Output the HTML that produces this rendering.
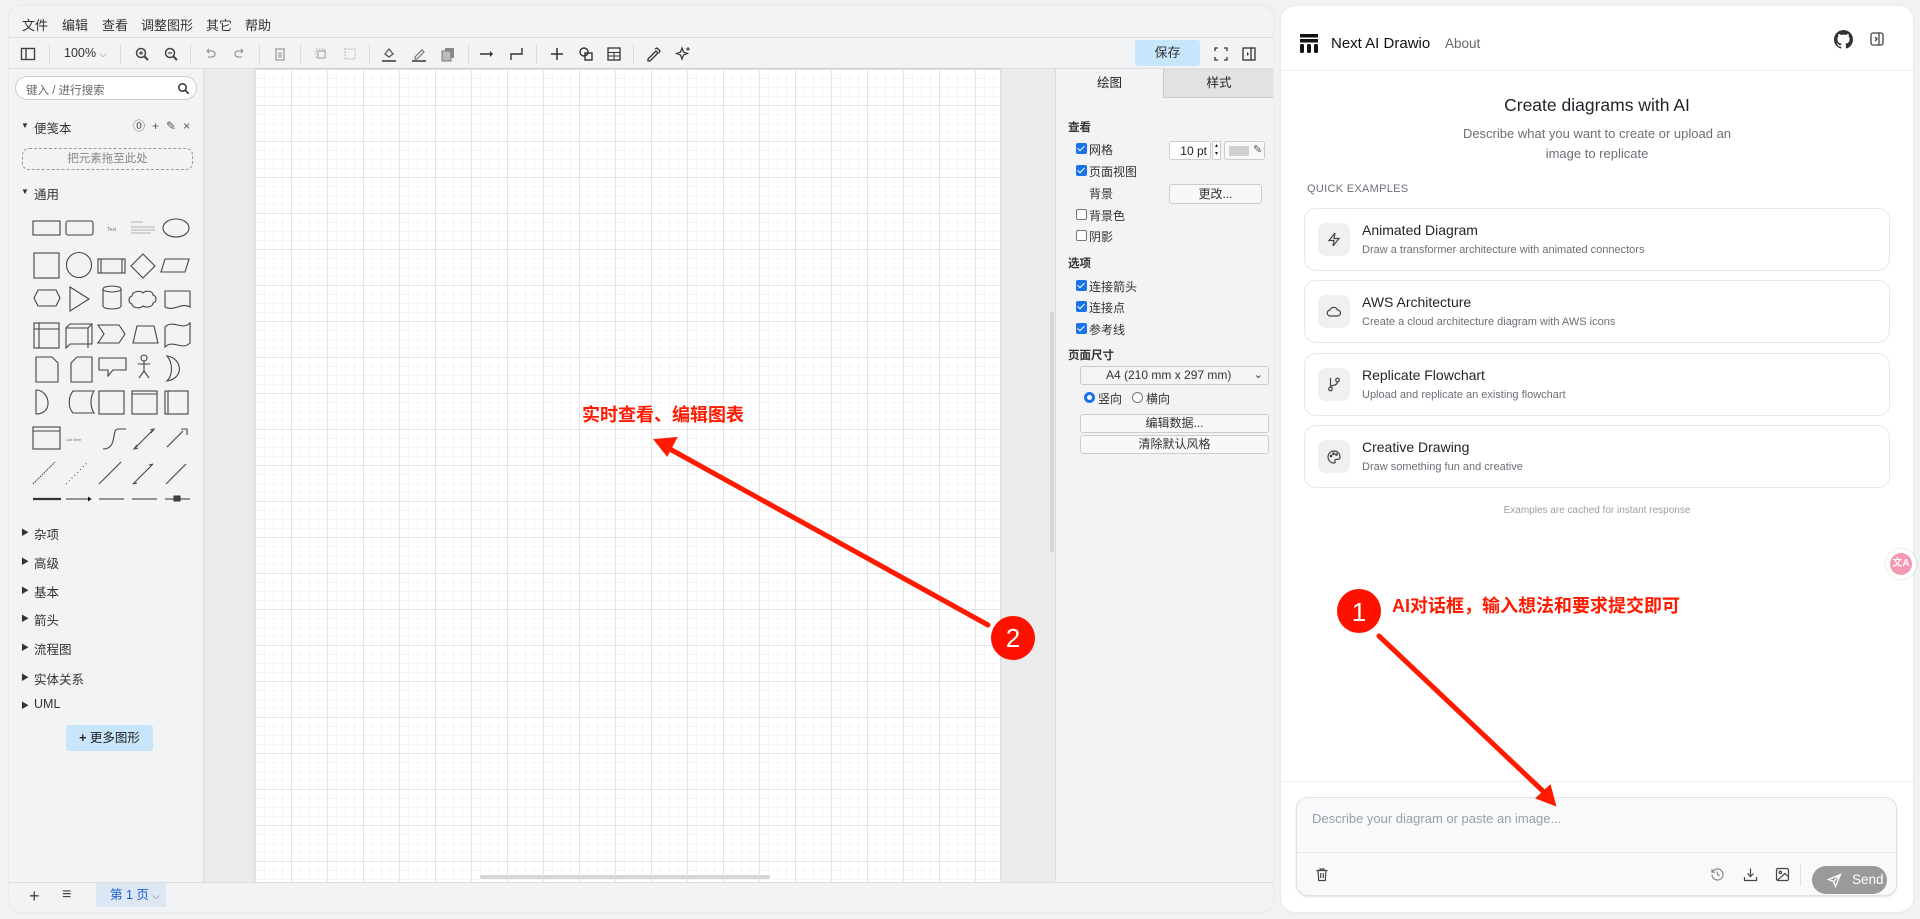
<!DOCTYPE html>
<html><head><meta charset="utf-8"><style>
*{box-sizing:border-box;margin:0;padding:0}
body{width:1920px;height:919px;overflow:hidden;background:#f1f2f4;font-family:"Liberation Sans","Noto Sans CJK SC",sans-serif;position:relative;color:#222}
.a{position:absolute}
.dp{left:9px;top:6px;width:1264px;height:906px;background:#f1f3f4;border-radius:12px;overflow:hidden;box-shadow:0 0 3px rgba(0,0,0,.08)}
.menu span{position:absolute;top:9px;font-size:13px;color:#333}
.tb{left:0;top:31px;width:1264px;height:32px;border-top:1px solid #dadce0;border-bottom:1px solid #dadce0}
.sep{position:absolute;top:6px;width:1px;height:20px;background:#dadce0}
.ic{position:absolute;top:7px;width:18px;height:18px}
.sb{left:0;top:63px;width:195px;height:813px;border-right:1px solid #dadce0}
.sbl{position:absolute;left:25px;font-size:12.5px;color:#333}
.tri{position:absolute;left:12px;font-size:8px;color:#333}
.canvas{left:195px;top:63px;width:852px;height:813px;background:#ebebeb}
.page{left:246px;top:63px;width:745px;height:813px;background-color:#fff;
background-image:linear-gradient(#e4e4e4 1px,transparent 1px),linear-gradient(90deg,#e4e4e4 1px,transparent 1px),linear-gradient(#f5f5f5 1px,transparent 1px),linear-gradient(90deg,#f5f5f5 1px,transparent 1px);
background-size:36px 36px,36px 36px,9px 9px,9px 9px;box-shadow:0 0 2px rgba(0,0,0,.2)}
.fp{left:1046px;top:63px;width:218px;height:813px;background:#f1f3f4;border-left:1px solid #dadce0}
.fl{position:absolute;font-size:12px;color:#333}
.cb{position:absolute;left:20px;width:11px;height:11px;border-radius:2px;background:#1a73e8}
.cb:after{content:"";position:absolute;left:3px;top:1px;width:3px;height:6px;border:solid #fff;border-width:0 1.5px 1.5px 0;transform:rotate(45deg)}
.cbo{position:absolute;left:20px;width:11px;height:11px;border-radius:2px;border:1px solid #777;background:#fff}
.btn{position:absolute;background:#f8f8f8;border:1px solid #ccc;border-radius:3px;font-size:12px;text-align:center;color:#333}
.rp{left:1281px;top:6px;width:632px;height:906px;background:#fff;border-radius:14px;box-shadow:0 0 3px rgba(0,0,0,.08)}
.card{position:absolute;left:23px;width:586px;height:63px;border:1px solid #e6e7ea;border-radius:12px}
.card .ib{position:absolute;left:13px;top:14px;width:32px;height:33px;background:#f0f0f1;border-radius:8px}
.card .t{position:absolute;left:57px;top:13px;font-size:14px;color:#1f2328}
.card .s{position:absolute;left:57px;top:35px;font-size:11px;color:#6b6f76}
.red{color:#ff1a00;font-weight:bold;font-family:"Liberation Sans","Noto Sans CJK SC",sans-serif}
</style></head><body>
<div class="a dp">
 <div class="menu"><span style="left:13px">文件</span><span style="left:53px">编辑</span><span style="left:93px">查看</span><span style="left:132px">调整图形</span><span style="left:197px">其它</span><span style="left:236px">帮助</span></div>
 <div class="a tb">
  <svg class="ic" style="left:10px" viewBox="0 0 18 18"><rect x="2.5" y="3.5" width="13" height="11" fill="none" stroke="#444" stroke-width="1.4"/><line x1="7" y1="3.5" x2="7" y2="14.5" stroke="#444" stroke-width="1.4"/></svg>
  <div class="sep" style="left:40px"></div>
  <span class="a" style="left:55px;top:8px;font-size:12.5px;color:#333">100% <span style="font-size:9px;color:#777">⌵</span></span>
  <div class="sep" style="left:111px"></div>
  <svg class="ic" style="left:124px" viewBox="0 0 18 18"><circle cx="8" cy="8" r="4.5" fill="none" stroke="#444" stroke-width="1.5"/><line x1="11" y1="11" x2="15" y2="15" stroke="#444" stroke-width="2"/><path d="M6 8h4M8 6v4" stroke="#444" stroke-width="1.2"/></svg>
  <svg class="ic" style="left:153px" viewBox="0 0 18 18"><circle cx="8" cy="8" r="4.5" fill="none" stroke="#444" stroke-width="1.5"/><line x1="11" y1="11" x2="15" y2="15" stroke="#444" stroke-width="2"/><path d="M6 8h4" stroke="#444" stroke-width="1.2"/></svg>
  <div class="sep" style="left:181px"></div>
  <svg class="ic" style="left:192px" viewBox="0 0 18 18"><path d="M6 6h5a3 3 0 010 6H7M6 6l2-2M6 6l2 2" fill="none" stroke="#999" stroke-width="1.3"/></svg>
  <svg class="ic" style="left:222px" viewBox="0 0 18 18"><path d="M12 6H7a3 3 0 000 6h4M12 6l-2-2M12 6l-2 2" fill="none" stroke="#999" stroke-width="1.3"/></svg>
  <div class="sep" style="left:250px"></div>
  <svg class="ic" style="left:262px" viewBox="0 0 18 18"><rect x="5" y="4" width="8" height="11" fill="none" stroke="#999" stroke-width="1.2"/><path d="M4 4h10M8 7v6M10 7v6" stroke="#999"/></svg>
  <div class="sep" style="left:291px"></div>
  <svg class="ic" style="left:303px" viewBox="0 0 18 18"><rect x="4" y="4" width="9" height="9" fill="none" stroke="#aaa" stroke-dasharray="1.5 1.5"/><rect x="6" y="6" width="7" height="7" fill="none" stroke="#999"/></svg>
  <svg class="ic" style="left:332px" viewBox="0 0 18 18"><rect x="4" y="4" width="10" height="10" fill="none" stroke="#aaa" stroke-dasharray="1.5 1.5"/></svg>
  <div class="sep" style="left:360px"></div>
  <svg class="ic" style="left:371px" viewBox="0 0 18 18"><path d="M5 9l4-5 4 5-4 3z" fill="none" stroke="#555" stroke-width="1.3"/><rect x="2" y="15" width="14" height="2" fill="#666"/></svg>
  <svg class="ic" style="left:401px" viewBox="0 0 18 18"><path d="M5 12l7-7 2 2-7 7H5z" fill="none" stroke="#777" stroke-width="1.2"/><rect x="2" y="15" width="14" height="2" fill="#666"/></svg>
  <svg class="ic" style="left:430px" viewBox="0 0 18 18"><rect x="6" y="3" width="9" height="10" fill="#888"/><rect x="3" y="6" width="9" height="10" fill="#bbb" stroke="#777"/></svg>
  <div class="sep" style="left:459px"></div>
  <svg class="ic" style="left:469px" viewBox="0 0 18 18"><path d="M2 9h12" stroke="#333" stroke-width="1.4"/><path d="M12 6l3 3-3 3z" fill="#333"/></svg>
  <svg class="ic" style="left:499px" viewBox="0 0 18 18"><path d="M3 15v-6h11V3" fill="none" stroke="#333" stroke-width="1.4"/></svg>
  <div class="sep" style="left:527px"></div>
  <svg class="ic" style="left:539px" viewBox="0 0 18 18"><path d="M9 3v12M3 9h12" stroke="#333" stroke-width="1.5"/></svg>
  <svg class="ic" style="left:568px" viewBox="0 0 18 18"><circle cx="7" cy="7" r="4" fill="none" stroke="#333" stroke-width="1.4"/><rect x="8" y="8" width="7" height="7" fill="none" stroke="#333" stroke-width="1.4"/></svg>
  <svg class="ic" style="left:596px" viewBox="0 0 18 18"><rect x="3" y="3" width="12" height="12" fill="none" stroke="#333" stroke-width="1.3"/><path d="M3 7.5h12M3 11h12M9 7.5v7.5" stroke="#333"/></svg>
  <div class="sep" style="left:624px"></div>
  <svg class="ic" style="left:636px" viewBox="0 0 18 18"><path d="M3 14l8-8 2 2-8 8H3zM10 4l2-1 3 3-1 2" fill="none" stroke="#333" stroke-width="1.3"/></svg>
  <svg class="ic" style="left:665px" viewBox="0 0 18 18"><path d="M8 3l1.5 4 4 1.5-4 1.5L8 14l-1.5-4-4-1.5 4-1.5z" fill="none" stroke="#333" stroke-width="1.2"/><path d="M14 2v4M12 4h4" stroke="#333"/></svg>
  <div class="a" style="left:1126px;top:2px;width:65px;height:26px;background:#c7e5fb;border-radius:3px;font-size:13px;text-align:center;line-height:26px;color:#333">保存</div>
  <svg class="ic" style="left:1203px" viewBox="0 0 18 18"><path d="M3 6V3h3M12 3h3v3M15 12v3h-3M6 15H3v-3" fill="none" stroke="#333" stroke-width="1.3"/></svg>
  <svg class="ic" style="left:1231px" viewBox="0 0 18 18"><rect x="3" y="3" width="12" height="12" fill="none" stroke="#333" stroke-width="1.3"/><path d="M11 3v12" stroke="#333" stroke-width="1.3"/><path d="M7 7l2 2-2 2z" fill="#333"/></svg>
 </div>
 <div class="a sb">
  <div class="a" style="left:6px;top:7px;width:182px;height:24px;background:#fff;border:1px solid #ccc;border-radius:12px;font-size:11.5px;color:#666;padding:5px 0 0 10px">键入 / 进行搜索</div>
  <svg class="a" style="left:168px;top:13px" width="13" height="13" viewBox="0 0 13 13"><circle cx="5.5" cy="5.5" r="3.7" fill="none" stroke="#333" stroke-width="1.5"/><path d="M8.2 8.2l3.5 3.5" stroke="#333" stroke-width="1.7"/></svg>
  <span class="tri" style="top:52px">▼</span><span class="sbl" style="top:49px">便笺本</span>
  <span class="a" style="left:124px;top:48px;font-size:12px;color:#555;letter-spacing:7px">⓪+✎×</span>
  <div class="a" style="left:13px;top:79px;width:171px;height:22px;border:1px dashed #999;border-radius:7px;font-size:11.5px;color:#888;text-align:center;line-height:20px">把元素拖至此处</div>
  <span class="tri" style="top:118px">▼</span><span class="sbl" style="top:115px">通用</span>
  <svg class="a" style="left:12px;top:140px" width="175" height="300" viewBox="0 0 175 300" fill="none" stroke="#444" stroke-width="1.1">
   <rect x="12" y="12" width="27" height="14"/><rect x="45" y="12" width="27" height="14" rx="2"/><text x="86" y="22" font-size="5" fill="#777" stroke="none">Text</text><path d="M110 13h12M110 18h24M110 21h24M110 24h20" stroke="#999" stroke-width=".8"/><ellipse cx="155" cy="19" rx="13" ry="9"/>
   <rect x="13" y="44" width="25" height="25"/><circle cx="58" cy="56" r="12.5"/><rect x="77" y="50" width="27" height="14"/><path d="M80 50v14M101 50v14"/><path d="M122 45l12 12-12 12-12-12z"/><path d="M144 50h24l-4 13h-24z"/>
   <path d="M13 89l4-8h18l4 8-4 8H17z"/><path d="M49 78l19 12-19 12z"/><path d="M82 80a9 3 0 0018 0v17a9 3 0 01-18 0zM82 80a9 3 0 0118 0"/><path d="M111 87c0-5 9-6 11-3 3-3 10-2 10 2 4 1 4 7 0 8 0 4-7 5-10 3-3 3-11 2-11-2-4-1-4-7 0-8z"/><path d="M144 82h25v16c-8-5-17 5-25 0z"/>
   <rect x="13" y="114" width="25" height="25"/><path d="M13 120h25M18 114v25"/><path d="M45 119l4-4h22v20H49l-4 4v-20h22l4-4M67 119v20"/><path d="M77 116h21l6 9-6 9H77l6-9z"/><path d="M112 134l4-17h17l4 17z"/><path d="M144 118c8-8 17 4 25-4v20c-8 8-17-4-25 4z"/>
   <path d="M15 148h16l6 6v19H15z"/><path d="M50 154l6-6h15v25H50z"/><path d="M78 149h27v12H92l-5 6v-6h-9z"/><circle cx="123" cy="149" r="3"/><path d="M123 152v10M117 155h12M123 162l-5 7M123 162l5 7"/><path d="M146 147c15 2 18 22 0 25 6-6 6-18 0-25z"/>
   <path d="M15 181c14 0 18 24 0 24z"/><path d="M52 182h21c-4 6-4 16 0 22H52c-5-5-5-16 0-22z"/><rect x="78" y="182" width="25" height="23"/><rect x="111" y="182" width="25" height="23"/><path d="M111 185h25"/><rect x="144" y="182" width="23" height="23"/><path d="M147 182v23"/>
   <rect x="12" y="218" width="27" height="22"/><path d="M12 222h27"/><text x="45" y="232" font-size="4" fill="#777" stroke="none">List Item</text><path d="M82 240c15 0 8-20 15-20h8"/><path d="M113 240l20-20M116 236l-3 4 4-1M130 224l3-4-4 1"/><path d="M146 238l16-16M160 220h6v6"/>
   <path d="M12 275l22-22" stroke-dasharray="1.5 1"/><path d="M45 275l22-22" stroke-dasharray="1 3"/><path d="M78 275l22-22"/><path d="M112 275l20-20M112 275l4-1M132 255l-4 1"/><path d="M145 275l20-20"/>
  </svg>
  <svg class="a" style="left:12px;top:424px" width="175" height="12" viewBox="0 0 175 12" stroke="#333"><path d="M12 6h28" stroke-width="2.2"/><path d="M45 6h22M67 4l3 2-3 2" stroke-width="1"/><path d="M78 6h25" stroke-width="1"/><path d="M111 6h25" stroke-width="1"/><path d="M144 6h25" stroke-width="1"/><rect x="153" y="3" width="6" height="5" fill="#444"/></svg>
  <span class="tri" style="top:458px">▶</span><span class="sbl" style="top:455px">杂项</span>
  <span class="tri" style="top:487px">▶</span><span class="sbl" style="top:484px">高级</span>
  <span class="tri" style="top:516px">▶</span><span class="sbl" style="top:513px">基本</span>
  <span class="tri" style="top:544px">▶</span><span class="sbl" style="top:541px">箭头</span>
  <span class="tri" style="top:573px">▶</span><span class="sbl" style="top:570px">流程图</span>
  <span class="tri" style="top:603px">▶</span><span class="sbl" style="top:600px">实体关系</span>
  <span class="tri" style="top:631px">▶</span><span class="sbl" style="top:628px">UML</span>
  <div class="a" style="left:57px;top:656px;width:87px;height:26px;background:#c7e5fb;border-radius:3px;font-size:12.5px;text-align:center;line-height:26px;color:#222"><b>+</b> 更多图形</div>
 </div>
 <div class="a canvas"></div>
 <div class="a page"></div>
 <div class="a" style="left:1041px;top:306px;width:4px;height:240px;background:#d6d6d6;border-radius:2px"></div>
 <div class="a" style="left:471px;top:869px;width:290px;height:4px;background:#d6d6d6;border-radius:2px"></div>
 <div class="a fp">
  <div class="a" style="left:0;top:0;width:107px;height:29px;text-align:center;line-height:29px;font-size:12.5px">绘图</div>
  <div class="a" style="left:107px;top:0;width:111px;height:29px;background:#e2e2e2;border-left:1px solid #ccc;border-bottom:1px solid #ccc;text-align:center;line-height:29px;font-size:12.5px">样式</div>
  <span class="fl" style="left:12px;top:50px;font-weight:bold;font-size:11.5px">查看</span>
  <div class="cb" style="top:74px"></div><span class="fl" style="left:33px;top:72px">网格</span>
  <div class="a" style="left:113px;top:72px;width:42px;height:19px;background:#fff;border:1px solid #ccc;border-radius:3px;font-size:12px;text-align:right;padding:2px 3px 0 0">10 pt</div>
  <div class="a" style="left:156px;top:72px;width:9px;height:19px;border:1px solid #ccc;background:#fff;font-size:6px;line-height:8px;text-align:center">▴<br>▾</div>
  <div class="a" style="left:168px;top:72px;width:41px;height:19px;border:1px solid #ccc;border-radius:3px;background:#f8f8f8"><div class="a" style="left:4px;top:4px;width:20px;height:10px;background:#d0d0d0"></div><span class="a" style="left:28px;top:1px;font-size:11px;color:#555">✎</span></div>
  <div class="cb" style="top:96px"></div><span class="fl" style="left:33px;top:94px">页面视图</span>
  <span class="fl" style="left:33px;top:116px">背景</span>
  <div class="btn" style="left:113px;top:115px;width:93px;height:20px;line-height:18px">更改...</div>
  <div class="cbo" style="top:140px"></div><span class="fl" style="left:33px;top:138px">背景色</span>
  <div class="cbo" style="top:161px"></div><span class="fl" style="left:33px;top:159px">阴影</span>
  <span class="fl" style="left:12px;top:186px;font-weight:bold;font-size:11.5px">选项</span>
  <div class="cb" style="top:211px"></div><span class="fl" style="left:33px;top:209px">连接箭头</span>
  <div class="cb" style="top:232px"></div><span class="fl" style="left:33px;top:230px">连接点</span>
  <div class="cb" style="top:254px"></div><span class="fl" style="left:33px;top:252px">参考线</span>
  <span class="fl" style="left:12px;top:278px;font-weight:bold;font-size:11.5px">页面尺寸</span>
  <div class="btn" style="left:24px;top:297px;width:189px;height:19px;line-height:17px;background:#f4f4f4;text-align:left;padding-left:25px">A4 (210 mm x 297 mm)<span class="a" style="right:5px;top:0;font-size:11px">⌄</span></div>
  <div class="a" style="left:28px;top:323px;width:11px;height:11px;border-radius:50%;border:3px solid #1a73e8;background:#fff"></div><span class="fl" style="left:42px;top:321px">竖向</span>
  <div class="a" style="left:76px;top:323px;width:11px;height:11px;border-radius:50%;border:1px solid #777;background:#fff"></div><span class="fl" style="left:90px;top:321px">横向</span>
  <div class="btn" style="left:24px;top:345px;width:189px;height:19px;line-height:17px">编辑数据...</div>
  <div class="btn" style="left:24px;top:366px;width:189px;height:19px;line-height:17px">清除默认风格</div>
 </div>
 <div class="a" style="left:0;top:876px;width:1264px;height:30px;border-top:1px solid #dadce0;background:#f1f3f4">
  <span class="a" style="left:20px;top:3px;font-size:18px;color:#444">+</span>
  <span class="a" style="left:53px;top:3px;font-size:16px;color:#444">≡</span>
  <div class="a" style="left:87px;top:0;width:70px;height:24px;background:#dde7f4;font-size:12.5px;color:#1a5fd0;line-height:24px;padding-left:14px">第 1 页 <span style="font-size:9px;color:#555">⌵</span></div>
 </div>
</div>

<div class="a rp">
 <div class="a" style="left:0;top:0;width:632px;height:65px;border-bottom:1px solid #eceef1"></div>
 <svg class="a" style="left:18px;top:27px" width="20" height="21" viewBox="0 0 20 21"><rect x="1" y="1" width="18" height="3.5" fill="#111"/><rect x="1" y="6" width="18" height="3.5" fill="#111"/><rect x="1" y="11" width="4" height="9" rx="1.5" fill="#111"/><rect x="8" y="11" width="4" height="9" rx="1.5" fill="#111"/><rect x="15" y="11" width="4" height="9" rx="1.5" fill="#111"/></svg>
 <span class="a" style="left:50px;top:29px;font-size:15px;color:#111">Next AI Drawio</span>
 <span class="a" style="left:164px;top:30px;font-size:13.5px;color:#666">About</span>
 <svg class="a" style="left:553px;top:24px" width="19" height="19" viewBox="0 0 16 16"><path fill="#333" d="M8 0C3.58 0 0 3.58 0 8c0 3.540 2.29 6.53 5.47 7.59.4.07.55-.17.55-.38v-1.33c-2.23.48-2.7-1.07-2.7-1.07-.36-.92-.89-1.170-.89-1.17-.73-.5.05-.49.05-.49.8.06 1.23.83 1.23.83.72 1.22 1.87.87 2.33.66.07-.52.28-.87.5-1.07-1.78-.2-3.64-.89-3.64-3.95 0-.87.31-1.59.82-2.15-.08-.2-.36-1.02.08-2.12 0 0 .67-.21 2.2.82a7.6 7.6 0 014 0c1.53-1.04 2.2-.82 2.2-.82.44 1.1.16 1.92.08 2.12.51.56.82 1.27.82 2.15 0 3.07-1.87 3.75-3.65 3.95.29.25.54.73.54 1.48v2.2c0 .21.15.46.55.38A8 8 0 0016 8c0-4.42-3.58-8-8-8z"/></svg>
 <svg class="a" style="left:588px;top:25px" width="16" height="16" viewBox="0 0 16 16" fill="none" stroke="#444" stroke-width="1.3"><rect x="2" y="2" width="12" height="12" rx="2"/><path d="M10 2v12M6 6l2 2-2 2"/></svg>
 <div class="a" style="left:0;top:89px;width:632px;text-align:center;font-size:17.5px;color:#1f2328">Create diagrams with AI</div>
 <div class="a" style="left:0;top:118px;width:632px;text-align:center;font-size:13px;line-height:20px;color:#6b6f76">Describe what you want to create or upload an<br>image to replicate</div>
 <span class="a" style="left:26px;top:177px;font-size:11px;color:#6b6f76;letter-spacing:.3px">QUICK EXAMPLES</span>
 <div class="card" style="top:202px"><div class="ib"><svg class="a" style="left:9px;top:9px" width="14" height="15" viewBox="0 0 14 15" fill="none" stroke="#444" stroke-width="1.2"><path d="M8 1L2 8.5h5L6 14l6-7.5H7z"/></svg></div><div class="t">Animated Diagram</div><div class="s">Draw a transformer architecture with animated connectors</div></div>
 <div class="card" style="top:274px"><div class="ib"><svg class="a" style="left:8px;top:9px" width="16" height="15" viewBox="0 0 16 15" fill="none" stroke="#444" stroke-width="1.2"><path d="M4.5 12h7a3 3 0 000-6 4 4 0 00-7.5 0 3 3 0 00.5 6z"/></svg></div><div class="t">AWS Architecture</div><div class="s">Create a cloud architecture diagram with AWS icons</div></div>
 <div class="card" style="top:347px"><div class="ib"><svg class="a" style="left:9px;top:9px" width="14" height="15" viewBox="0 0 14 15" fill="none" stroke="#444" stroke-width="1.2"><circle cx="3.5" cy="12" r="1.8"/><circle cx="10.5" cy="3" r="1.8"/><path d="M3.5 1v9M10.5 5c0 4-7 3-7 5"/></svg></div><div class="t">Replicate Flowchart</div><div class="s">Upload and replicate an existing flowchart</div></div>
 <div class="card" style="top:419px"><div class="ib"><svg class="a" style="left:8px;top:9px" width="16" height="16" viewBox="0 0 16 16" fill="none" stroke="#444" stroke-width="1.2"><path d="M8 2a6 6 0 000 12c1 0 1.5-.8 1-1.6-.6-1 0-2 1.2-2H12a2.5 2.5 0 002-2.5C14 4.5 11.3 2 8 2z"/><circle cx="5" cy="7" r=".8"/><circle cx="7.5" cy="4.8" r=".8"/><circle cx="10.5" cy="5.5" r=".8"/></svg></div><div class="t">Creative Drawing</div><div class="s">Draw something fun and creative</div></div>
 <div class="a" style="left:0;top:499px;width:632px;text-align:center;font-size:10px;color:#9a9ea5">Examples are cached for instant response</div>
 <div class="a" style="left:0;top:775px;width:632px;height:1px;background:#eceef1"></div>
 <div class="a" style="left:15px;top:791px;width:601px;height:99px;background:#f8f9fa;border:1px solid #dfe1e5;border-radius:12px;box-shadow:0 1px 2px rgba(0,0,0,.12)">
  <span class="a" style="left:15px;top:13px;font-size:13px;color:#9a9ea5">Describe your diagram or paste an image...</span>
  <div class="a" style="left:0;top:54px;width:599px;height:1px;background:#e6e7ea"></div>
  <svg class="a" style="left:18px;top:69px" width="14" height="15" viewBox="0 0 14 15" fill="none" stroke="#444" stroke-width="1.2"><path d="M1.5 3.5h11M5 3.5V2h4v1.5M3 3.5l.7 10h6.6l.7-10M5.7 6v5M8.3 6v5"/></svg>
  <svg class="a" style="left:413px;top:69px" width="15" height="15" viewBox="0 0 15 15" fill="none" stroke="#888" stroke-width="1.2"><path d="M2 7.5a5.5 5.5 0 101.6-3.9L2 5.2M2 2v3.2h3.2M7.5 4.5v3l2 1.5"/></svg>
  <svg class="a" style="left:446px;top:69px" width="15" height="15" viewBox="0 0 15 15" fill="none" stroke="#444" stroke-width="1.2"><path d="M7.5 1.5v8M4.5 6.5l3 3 3-3M1.5 10v3.5h12V10"/></svg>
  <svg class="a" style="left:478px;top:69px" width="15" height="15" viewBox="0 0 15 15" fill="none" stroke="#444" stroke-width="1.2"><rect x="1.5" y="1.5" width="12" height="12" rx="1.5"/><circle cx="5.3" cy="5.3" r="1.2"/><path d="M13.5 10l-3.5-3.5-8 7"/></svg>
  <div class="a" style="left:503px;top:66px;width:1px;height:22px;background:#dfe1e5"></div>
  <div class="a" style="left:515px;top:68px;width:75px;height:28px;background:#9a9a9a;border-radius:14px;color:#fff;font-size:13.5px;line-height:28px;padding-left:40px">Send</div>
  <svg class="a" style="left:530px;top:75px" width="15" height="15" viewBox="0 0 15 15" fill="none" stroke="#fff" stroke-width="1.3"><path d="M13.5 1.5L1.5 6.5l5 2 2 5zM13.5 1.5l-7 7"/></svg>
 </div>
</div>
<div class="a" style="left:1886px;top:549px;width:30px;height:30px;border-radius:50%;background:#fff;box-shadow:0 0 3px rgba(0,0,0,.15)"><div class="a" style="left:4px;top:4px;width:22px;height:22px;border-radius:50%;background:#f497b0;color:#fff;font-size:10px;text-align:center;line-height:22px;font-weight:bold">文A</div></div>

<svg class="a" style="left:0;top:0" width="1920" height="919">
 <path d="M988 625L668 448" stroke="#ff1a00" stroke-width="5" stroke-linecap="round"/>
 <path d="M655 440l21-2-9 17z" fill="#ff1a00" stroke="#ff1a00" stroke-width="2"/>
 <circle cx="1013" cy="638" r="22" fill="#ff1100"/>
 <text x="1013" y="647" font-size="26" fill="#fff" text-anchor="middle" font-family="Liberation Sans,sans-serif">2</text>
 <path d="M1379 636L1545 793" stroke="#ff1a00" stroke-width="5" stroke-linecap="round"/>
 <path d="M1555 805l-18-7 13-12z" fill="#ff1a00" stroke="#ff1a00" stroke-width="2"/>
 <circle cx="1359" cy="611" r="22" fill="#ff1100"/>
 <text x="1359" y="621" font-size="26" fill="#fff" text-anchor="middle" font-family="Liberation Sans,sans-serif">1</text>
</svg>
<div class="a red" style="left:582px;top:401px;font-size:18px">实时查看、编辑图表</div>
<div class="a red" style="left:1392px;top:592px;font-size:18px">AI对话框，输入想法和要求提交即可</div>
</body></html>
